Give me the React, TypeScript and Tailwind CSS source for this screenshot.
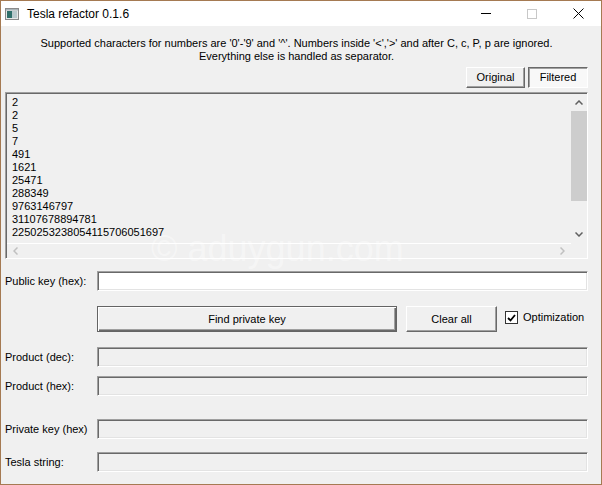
import React from "react"

const font = { fontFamily: '"Liberation Sans", Arial, sans-serif' }

const numbers = [
  "2",
  "2",
  "5",
  "7",
  "491",
  "1621",
  "25471",
  "288349",
  "9763146797",
  "31107678894781",
  "2250253238054115706051697",
]

function Field({ white }: { white?: boolean }) {
  return (
    <div
      className={`h-full flex-1 border border-t-[#a0a0a0] border-l-[#a0a0a0] border-r-white border-b-white shadow-[inset_1px_1px_0_#696969,inset_-1px_-1px_0_#e3e3e3] ${
        white ? "bg-white" : "bg-[#f0f0f0]"
      }`}
    />
  )
}

function Row({ label, mt }: { label: string; mt: string }) {
  return (
    <div className={`flex h-[20px] items-center ${mt}`}>
      <div className="w-[92px] shrink-0 text-[11px] text-black">{label}</div>
      <Field />
    </div>
  )
}

function TitleIcon() {
  return (
    <svg width="14" height="12" viewBox="0 0 14 12">
      <rect x="0.5" y="0.5" width="13" height="11" fill="#e8e8e8" stroke="#8a8a8a" />
      <rect x="2" y="3" width="5" height="7" fill="#2f6f6a" />
      <rect x="7" y="3" width="5" height="7" fill="#b9c9cc" />
      <rect x="1" y="1" width="12" height="1.5" fill="#a9b4b8" />
    </svg>
  )
}

export default function App() {
  return (
    <div
      className="flex h-[485px] w-[602px] flex-col overflow-hidden border border-[#a57a52] bg-[#f0f0f0] text-black"
      style={font}
    >
      {/* Title bar */}
      <div className="flex h-[25px] shrink-0 items-center bg-white pl-[4px]">
        <TitleIcon />
        <span className="ml-[8px] text-[12px] text-black">Tesla refactor 0.1.6</span>
        <div className="ml-auto flex h-full items-center">
          <div className="flex h-full w-[46px] items-center justify-center">
            <div className="h-px w-[10px] bg-black" />
          </div>
          <div className="flex h-full w-[46px] items-center justify-center">
            <div className="h-[10px] w-[10px] border border-[#c8c8c8]" />
          </div>
          <div className="flex h-full w-[46px] items-center justify-center">
            <svg width="11" height="11" viewBox="0 0 11 11">
              <path d="M0.5 0.5 L10.5 10.5 M10.5 0.5 L0.5 10.5" stroke="#000" strokeWidth="1" />
            </svg>
          </div>
        </div>
      </div>

      {/* Body */}
      <div className="flex flex-1 flex-col pl-[4px] pr-[13px]">
        <div className="mt-[11px] text-center text-[11px] leading-[13px]">
          <div>
            Supported characters for numbers are '0'-'9' and '^'. Numbers inside '&lt;','&gt;' and after C, c, P, p are
            ignored.
          </div>
          <div>Everything else is handled as separator.</div>
        </div>

        <div className="mt-[4px] flex h-[21px] justify-end gap-[3px]">
          <button className="w-[59px] border border-t-white border-l-white border-r-[#696969] border-b-[#696969] bg-[#f0f0f0] text-[11px] shadow-[inset_-1px_-1px_0_#a0a0a0]">
            Original
          </button>
          <button className="w-[60px] border border-t-[#696969] border-l-[#696969] border-r-white border-b-white bg-[#f8f8f8] text-[11px] shadow-[inset_1px_1px_0_#a0a0a0]">
            Filtered
          </button>
        </div>

        {/* Output list */}
        <div className="relative mt-[4px] flex h-[167px] flex-col border border-t-[#a0a0a0] border-l-[#a0a0a0] border-r-white border-b-white shadow-[inset_1px_1px_0_#696969]">
          <div className="flex flex-1 pl-[1px] pt-[1px]">
            <div className="flex-1 pl-[5px] pt-[2px] text-[11px] leading-[13px]">
              {numbers.map((n, i) => (
                <div key={i}>{n}</div>
              ))}
            </div>
            <div className="flex w-[16px] flex-col items-center">
              <div className="flex h-[17px] items-center justify-center">
                <svg width="8" height="5" viewBox="0 0 8 5">
                  <path d="M0.5 4.5 L4 1 L7.5 4.5" stroke="#606060" strokeWidth="1.5" fill="none" />
                </svg>
              </div>
              <div className="h-[90px] w-full bg-[#cdcdcd]" />
              <div className="flex-1" />
              <div className="flex h-[17px] items-center justify-center">
                <svg width="8" height="5" viewBox="0 0 8 5">
                  <path d="M0.5 0.5 L4 4 L7.5 0.5" stroke="#606060" strokeWidth="1.5" fill="none" />
                </svg>
              </div>
            </div>
          </div>
          <div className="flex h-[15px] pl-[1px]">
            <div className="flex flex-1 items-center justify-between border-t border-white px-[6px]">
              <svg width="5" height="8" viewBox="0 0 5 8">
                <path d="M4.5 0.5 L1 4 L4.5 7.5" stroke="#c0c0c0" strokeWidth="1.5" fill="none" />
              </svg>
              <svg width="5" height="8" viewBox="0 0 5 8">
                <path d="M0.5 0.5 L4 4 L0.5 7.5" stroke="#c0c0c0" strokeWidth="1.5" fill="none" />
              </svg>
            </div>
            <div className="w-[16px]" />
          </div>
          <div className="pointer-events-none absolute left-[145px] top-[138px] text-[36px] leading-none text-white/40">
            © aduygun.com
          </div>
        </div>

        {/* Public key */}
        <div className="mt-[12px] flex h-[20px] items-center">
          <div className="w-[92px] shrink-0 text-[11px]">Public key (hex):</div>
          <Field white />
        </div>

        {/* Actions */}
        <div className="mt-[15px] flex h-[26px] items-stretch pl-[92px]">
          <button className="w-[300px] border border-[#646464] bg-[#f0f0f0] text-[11px] shadow-[inset_1px_1px_0_#ffffff,inset_-1px_-1px_0_#696969,inset_-2px_-2px_0_#a0a0a0]">
            Find private key
          </button>
          <button className="ml-[9px] w-[91px] border border-t-white border-l-white border-r-[#696969] border-b-[#696969] bg-[#f0f0f0] text-[11px] shadow-[inset_-1px_-1px_0_#a0a0a0]">
            Clear all
          </button>
          <label className="ml-[8px] flex items-start gap-[5px] pt-[5px] text-[11px]">
            <span className="flex h-[13px] w-[13px] items-center justify-center border border-[#333] bg-white">
              <svg width="9" height="8" viewBox="0 0 9 8">
                <path d="M1 4 L3.5 6.5 L8 1" stroke="#000" strokeWidth="1.8" fill="none" />
              </svg>
            </span>
            <span className="leading-[12px]">Optimization</span>
          </label>
        </div>

        <Row label="Product (dec):" mt="mt-[15px]" />
        <Row label="Product (hex):" mt="mt-[9px]" />
        <Row label="Private key (hex)" mt="mt-[23px]" />
        <Row label="Tesla string:" mt="mt-[13px]" />
      </div>
    </div>
  )
}
